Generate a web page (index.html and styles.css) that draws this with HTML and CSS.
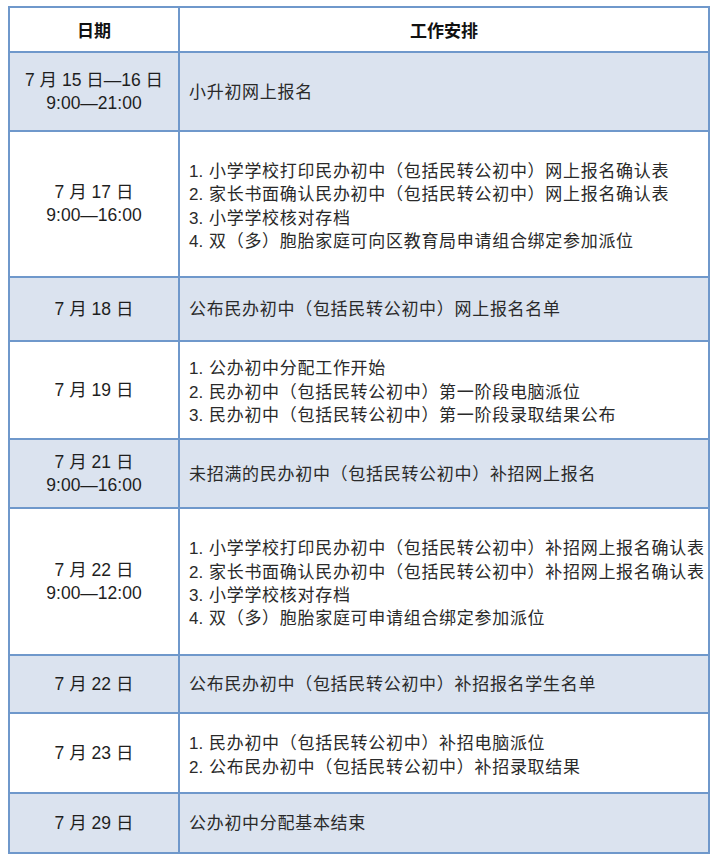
FILE: index.html
```html
<!DOCTYPE html>
<html lang="zh-CN">
<head>
<meta charset="utf-8">
<title>日程安排</title>
<link rel="stylesheet" href="styles.css">
</head>
<body>
<div class="wrap">
<table class="schedule">
  <colgroup><col class="c-date"><col class="c-work"></colgroup>
  <thead>
    <tr class="h45"><th>日期</th><th>工作安排</th></tr>
  </thead>
  <tbody>
    <tr class="alt h79"><td class="date">7 月 15 日—16 日<br>9:00—21:00</td><td class="work">小升初网上报名</td></tr>
    <tr class="h146"><td class="date">7 月 17 日<br>9:00—16:00</td><td class="work list"><span class="n">1.</span>小学学校打印民办初中（包括民转公初中）网上报名确认表<br><span class="n">2.</span>家长书面确认民办初中（包括民转公初中）网上报名确认表<br><span class="n">3.</span>小学学校核对存档<br><span class="n">4.</span>双（多）胞胎家庭可向区教育局申请组合绑定参加派位</td></tr>
    <tr class="alt h64"><td class="date">7 月 18 日</td><td class="work">公布民办初中（包括民转公初中）网上报名名单</td></tr>
    <tr class="h98"><td class="date">7 月 19 日</td><td class="work list"><span class="n">1.</span>公办初中分配工作开始<br><span class="n">2.</span>民办初中（包括民转公初中）第一阶段电脑派位<br><span class="n">3.</span>民办初中（包括民转公初中）第一阶段录取结果公布</td></tr>
    <tr class="alt h69"><td class="date">7 月 21 日<br>9:00—16:00</td><td class="work">未招满的民办初中（包括民转公初中）补招网上报名</td></tr>
    <tr class="h147"><td class="date">7 月 22 日<br>9:00—12:00</td><td class="work list"><span class="n">1.</span>小学学校打印民办初中（包括民转公初中）补招网上报名确认表<br><span class="n">2.</span>家长书面确认民办初中（包括民转公初中）补招网上报名确认表<br><span class="n">3.</span>小学学校核对存档<br><span class="n">4.</span>双（多）胞胎家庭可申请组合绑定参加派位</td></tr>
    <tr class="alt h58"><td class="date">7 月 22 日</td><td class="work">公布民办初中（包括民转公初中）补招报名学生名单</td></tr>
    <tr class="h80"><td class="date">7 月 23 日</td><td class="work list"><span class="n">1.</span>民办初中（包括民转公初中）补招电脑派位<br><span class="n">2.</span>公布民办初中（包括民转公初中）补招录取结果</td></tr>
    <tr class="alt h60"><td class="date">7 月 29 日</td><td class="work">公办初中分配基本结束</td></tr>
  </tbody>
</table>
</div>
</body>
</html>
```
FILE: styles.css
```css
html, body {
  margin: 0;
  padding: 0;
  background: #ffffff;
}
.wrap {
  padding: 6px 0 0 8px;
}
.schedule {
  border-collapse: collapse;
  width: 702px;
  table-layout: fixed;
  font-family: "Liberation Sans", "Noto Sans CJK SC", sans-serif;
  font-size: 17px;
  color: #1e1e1e;
}
.c-date { width: 170px; }
.schedule th,
.schedule td {
  border: 2px solid #6f98cb;
  padding: 0;
  vertical-align: middle;
}
.schedule th {
  font-weight: bold;
  text-align: center;
  color: #111;
}
.alt td {
  background: #dbe3ef;
}
.date {
  text-align: center;
  line-height: 23px;
  font-size: 17.5px;
}
.work {
  text-align: left;
  padding: 2px 0 0 9px !important;
  color: #2a2a2a;
  line-height: 24px;
  letter-spacing: 0.7px;
}
.list {
  line-height: 23.4px;
  padding-top: 5px !important;
}
.n {
  display: inline-block;
  width: 20px;
  letter-spacing: 0;
}
.h45 { height: 45px; }
.h79 { height: 79px; }
.h146 { height: 146px; }
.h64 { height: 64px; }
.h98 { height: 98px; }
.h69 { height: 69px; }
.h147 { height: 147px; }
.h58 { height: 58px; }
.h80 { height: 80px; }
.h60 { height: 60px; }
```
